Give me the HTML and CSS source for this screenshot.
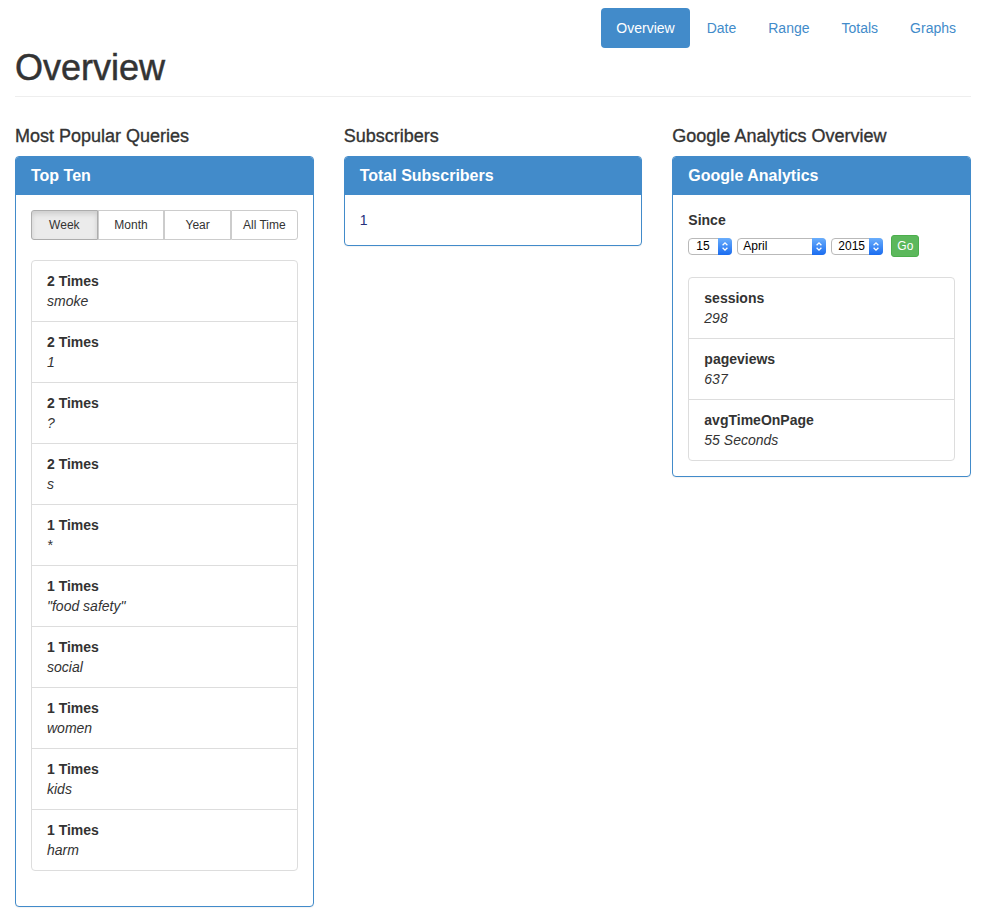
FILE: index.html
```html
<!DOCTYPE html>
<html lang="en">
<head>
<meta charset="utf-8">
<title>Overview</title>
<link rel="stylesheet" href="styles.css">
</head>
<body>
<div class="container">
  <ul class="pills">
    <li><a class="pill active" href="#">Overview</a></li>
    <li><a class="pill" href="#">Date</a></li>
    <li><a class="pill" href="#">Range</a></li>
    <li><a class="pill" href="#">Totals</a></li>
    <li><a class="pill" href="#">Graphs</a></li>
  </ul>
  <div class="page-header"><h1>Overview</h1></div>

  <div class="columns">
    <div class="col">
      <h4 class="section-title">Most Popular Queries</h4>
      <div class="panel">
        <div class="panel-heading"><h3 class="panel-title">Top Ten</h3></div>
        <div class="panel-body">
          <div class="btn-group">
            <button class="btn active">Week</button>
            <button class="btn">Month</button>
            <button class="btn">Year</button>
            <button class="btn">All Time</button>
          </div>
          <ul class="list-group">
            <li class="list-item"><b>2 Times</b><i>smoke</i></li>
            <li class="list-item"><b>2 Times</b><i>1</i></li>
            <li class="list-item"><b>2 Times</b><i>?</i></li>
            <li class="list-item"><b>2 Times</b><i>s</i></li>
            <li class="list-item"><b>1 Times</b><i>*</i></li>
            <li class="list-item"><b>1 Times</b><i>"food safety"</i></li>
            <li class="list-item"><b>1 Times</b><i>social</i></li>
            <li class="list-item"><b>1 Times</b><i>women</i></li>
            <li class="list-item"><b>1 Times</b><i>kids</i></li>
            <li class="list-item"><b>1 Times</b><i>harm</i></li>
          </ul>
        </div>
      </div>
    </div>

    <div class="col">
      <h4 class="section-title">Subscribers</h4>
      <div class="panel">
        <div class="panel-heading"><h3 class="panel-title">Total Subscribers</h3></div>
        <div class="panel-body"><span class="count">1</span></div>
      </div>
    </div>

    <div class="col">
      <h4 class="section-title">Google Analytics Overview</h4>
      <div class="panel">
        <div class="panel-heading"><h3 class="panel-title">Google Analytics</h3></div>
        <div class="panel-body">
          <label class="since">Since</label>
          <div class="date-row">
            <div class="sel sel-day"><span class="sel-text">15</span><span class="sel-arrow"><svg width="8" height="11" viewBox="0 0 8 11"><path d="M1.6 4.2 L4 1.8 L6.4 4.2 M1.6 6.8 L4 9.2 L6.4 6.8" fill="none" stroke="#fff" stroke-width="1.3"/></svg></span></div>
            <div class="sel sel-month"><span class="sel-text">April</span><span class="sel-arrow"><svg width="8" height="11" viewBox="0 0 8 11"><path d="M1.6 4.2 L4 1.8 L6.4 4.2 M1.6 6.8 L4 9.2 L6.4 6.8" fill="none" stroke="#fff" stroke-width="1.3"/></svg></span></div>
            <div class="sel sel-year"><span class="sel-text">2015</span><span class="sel-arrow"><svg width="8" height="11" viewBox="0 0 8 11"><path d="M1.6 4.2 L4 1.8 L6.4 4.2 M1.6 6.8 L4 9.2 L6.4 6.8" fill="none" stroke="#fff" stroke-width="1.3"/></svg></span></div>
            <button class="btn-go">Go</button>
          </div>
          <ul class="list-group flush">
            <li class="list-item"><b>sessions</b><i>298</i></li>
            <li class="list-item"><b>pageviews</b><i>637</i></li>
            <li class="list-item"><b>avgTimeOnPage</b><i>55 Seconds</i></li>
          </ul>
        </div>
      </div>
    </div>
  </div>
</div>
</body>
</html>
```

FILE: styles.css
```css
* { box-sizing: border-box; }

body {
  margin: 0;
  font-family: "Liberation Sans", Arial, sans-serif;
  font-size: 14px;
  line-height: 20px;
  color: #333;
  background: #fff;
}

.container {
  padding: 0 12px 0 15px;
}

.pills {
  list-style: none;
  margin: 0;
  padding: 8px 0 0;
  display: flex;
  justify-content: flex-end;
}

.pills li { margin-left: 2px; }

.pill {
  display: block;
  padding: 10px 15px;
  line-height: 20px;
  border-radius: 4px;
  color: #428bca;
  text-decoration: none;
}

.pill.active {
  background: #428bca;
  color: #fff;
}

.page-header {
  margin: 0 0 20px;
  padding-bottom: 8px;
  border-bottom: 1px solid #eee;
}

.page-header h1 {
  margin: 0;
  font-size: 36px;
  font-weight: 500;
  line-height: 1.1;
  -webkit-text-stroke: 0.5px #333;
}

.columns {
  display: grid;
  grid-template-columns: repeat(3, 1fr);
  column-gap: 30px;
  align-items: start;
}

.section-title {
  margin: 10px 0;
  font-size: 18px;
  font-weight: 500;
  line-height: 1.1;
  -webkit-text-stroke: 0.35px #333;
}

.panel {
  border: 1px solid #428bca;
  border-radius: 4px;
  background: #fff;
  box-shadow: 0 1px 1px rgba(0,0,0,.05);
  margin-bottom: 20px;
}

.panel-heading {
  background: #428bca;
  color: #fff;
  padding: 10px 15px;
  border-bottom: 1px solid #428bca;
  border-radius: 3px 3px 0 0;
}

.panel-title {
  margin: 0;
  font-size: 16px;
  font-weight: bold;
  line-height: 17px;
}

.panel-body {
  padding: 15px;
}

.btn-group {
  display: flex;
}

.btn {
  flex: 1 1 0;
  padding: 5px 4px;
  font-family: inherit;
  font-size: 12px;
  line-height: 18px;
  color: #333;
  background: #fff;
  border: 1px solid #ccc;
  border-radius: 0;
  cursor: pointer;
}

.btn:first-child { border-radius: 3px 0 0 3px; }
.btn:last-child { border-radius: 0 3px 3px 0; }

.btn.active {
  background: #ebebeb;
  border-color: #adadad;
  box-shadow: inset 0 3px 5px rgba(0,0,0,.125);
}

.list-group {
  list-style: none;
  margin: 20px 0 20px;
  padding: 0;
}

.list-group.flush { margin-bottom: 0; }

.list-item {
  padding: 10px 15px;
  border: 1px solid #ddd;
  margin-bottom: -1px;
  background: #fff;
}

.list-item:first-child { border-radius: 4px 4px 0 0; }
.list-item:last-child { border-radius: 0 0 4px 4px; margin-bottom: 0; }

.list-item b, .list-item i { display: block; }

.count { color: #26307c; }

.since {
  display: inline-block;
  font-weight: bold;
  margin-bottom: 5px;
}

.date-row {
  display: flex;
  align-items: center;
}

.sel {
  display: flex;
  height: 17px;
  border: 1px solid #b9b9b9;
  border-radius: 4px;
  background: #fff;
  font-size: 12px;
  line-height: 15px;
  color: #000;
  margin-right: 5px;
}

.sel-text {
  flex: 1;
  padding-left: 6px;
}

.sel-day { width: 44px; }
.sel-day .sel-text { padding-left: 7px; }
.sel-month { width: 89px; }
.sel-month .sel-text { padding-left: 5px; }
.sel-year { width: 52px; margin-right: 8px; }

.sel-arrow {
  width: 14px;
  margin: -1px -1px -1px 0;
  border-radius: 0 4px 4px 0;
  background: linear-gradient(#6aaefc, #1a6cf0);
  display: flex;
  align-items: center;
  justify-content: center;
}

.btn-go {
  padding: 1px 5px;
  font-family: inherit;
  font-size: 12px;
  line-height: 18px;
  color: #fff;
  background: #5cb85c;
  border: 1px solid #4cae4c;
  border-radius: 3px;
}
```
